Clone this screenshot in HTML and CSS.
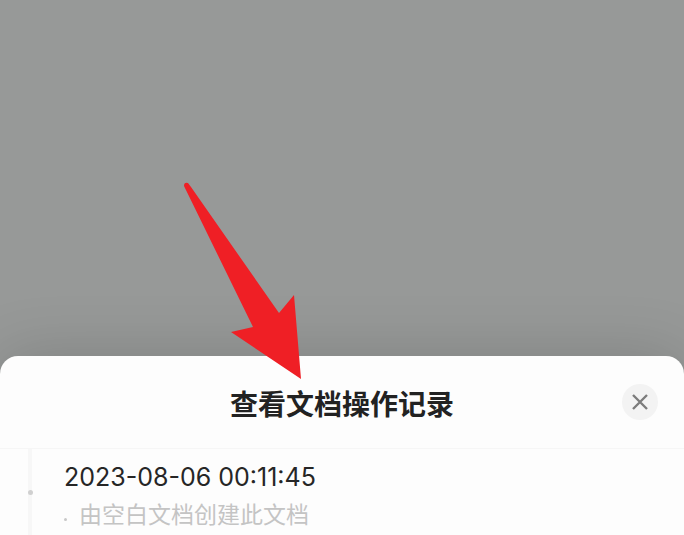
FILE: index.html
```html
<!DOCTYPE html>
<html lang="zh-CN">
<head>
<meta charset="utf-8">
<meta name="viewport" content="width=device-width, initial-scale=1">
<title>查看文档操作记录</title>
<link rel="stylesheet" href="styles.css">
</head>
<body>
<main class="screen">
  <section class="sheet" role="dialog" aria-labelledby="sheet-title">
    <header class="sheet-header">
      <h1 class="sheet-title" id="sheet-title">查看文档操作记录</h1>
      <button class="close" type="button" aria-label="关闭">
        <svg class="close-icon" viewBox="0 0 16 16" aria-hidden="true"><path d="M1 1 15 15M15 1 1 15"/></svg>
      </button>
    </header>
    <ol class="timeline">
      <li class="entry">
        <span class="rail"><span class="dot"></span></span>
        <div class="entry-body">
          <time class="entry-time" datetime="2023-08-06T00:11:45">2023-08-06 00:11:45</time>
          <p class="entry-text"><span class="bullet"></span>由空白文档创建此文档</p>
        </div>
      </li>
    </ol>
  </section>
  <svg class="arrow" viewBox="0 0 120 200" aria-hidden="true"><path d="M3 7Q3 3 7 4L10 8L98 134L113 116L120 200L50 153L72 148Z"/></svg>
</main>
</body>
</html>
```
FILE: styles.css
```css
* {
  box-sizing: border-box;
}

body {
  margin: 0;
  font-family: Inter, "Noto Sans CJK SC", sans-serif;
  background: #979998;
}

.screen {
  position: relative;
  display: flex;
  flex-direction: column;
  justify-content: flex-end;
  min-height: 100vh;
  overflow: hidden;
}

.sheet {
  background: #fdfdfd;
  border-radius: 18px 18px 0 0;
  box-shadow: 0 0 64px rgba(0, 0, 0, 0.16);
}

.sheet-header {
  display: grid;
  grid-template-columns: 1fr auto 1fr;
  align-items: center;
  height: 93px;
  padding: 0 26px;
  border-bottom: 1px solid #f6f6f6;
}

.sheet-title {
  grid-column: 2;
  margin: 0;
  padding-top: 6px;
  font-size: 28px;
  line-height: 40px;
  font-weight: 700;
  color: #222;
}

.close {
  justify-self: end;
  display: grid;
  place-items: center;
  width: 36px;
  height: 36px;
  padding: 0;
  border: 0;
  border-radius: 50%;
  background: #f3f3f3;
}

.close-icon {
  width: 16px;
  height: 16px;
  overflow: visible;
  fill: none;
  stroke: #7c7c7c;
  stroke-width: 2.4;
}

.timeline {
  margin: 0;
  padding: 0;
  list-style: none;
}

.entry {
  display: flex;
  gap: 32px;
  padding-left: 28px;
}

.rail {
  display: grid;
  place-items: center;
  width: 4px;
  background: #f7f7f7;
}

.dot {
  width: 5px;
  height: 5px;
  border-radius: 50%;
  background: #d0d0d0;
}

.entry-body {
  padding: 8px 0 2px;
}

.entry-time {
  display: block;
  font-size: 25px;
  line-height: 40px;
  color: #262626;
}

.entry-text {
  display: flex;
  align-items: center;
  gap: 12px;
  margin: 0;
  font-size: 23px;
  line-height: 36px;
  font-weight: 400;
  color: #c4c4c4;
}

.bullet {
  width: 3px;
  height: 3px;
  margin-top: 8px;
  border-radius: 50%;
  background: #c8c8c8;
}

.arrow {
  position: absolute;
  left: 181px;
  bottom: 156px;
  width: 120px;
  height: 200px;
  fill: #ef1f25;
}
```
